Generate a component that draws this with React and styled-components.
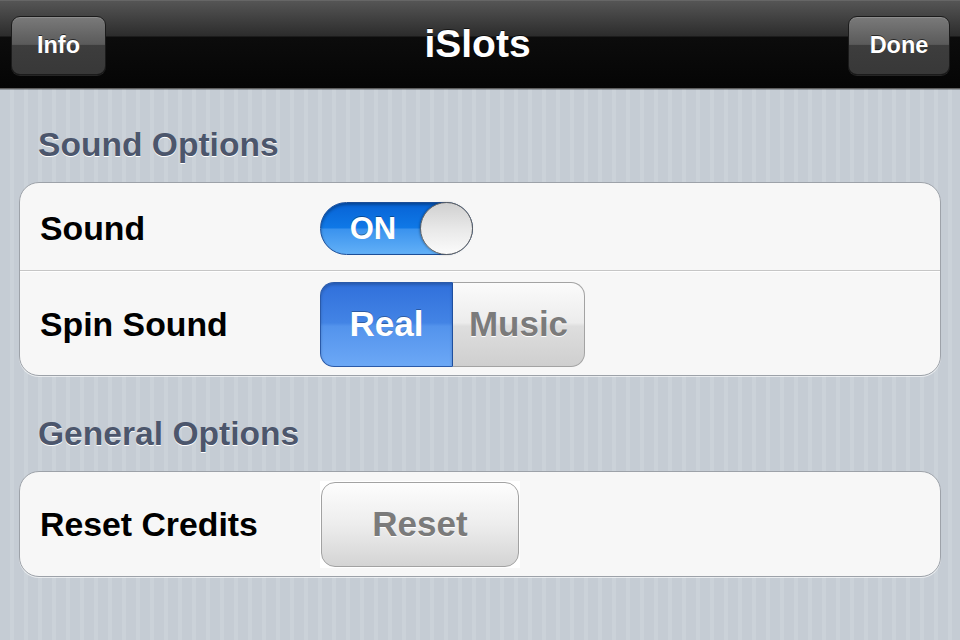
import styled, { createGlobalStyle } from "styled-components";
import { useState } from "react";

const GlobalStyle = createGlobalStyle`
    html, body {
        margin: 0;
        padding: 0;
    }

    body {
        width: 960px;
        height: 640px;
        overflow: hidden;
        font-family: "Liberation Sans", Arial, Helvetica, sans-serif;
        background: repeating-linear-gradient(90deg, #c5ccd4 0 10px, #cbd2d9 10px 14px);
    }
`

const Screen = styled.div`
    width: 960px;
    height: 640px;
    display: flex;
    flex-direction: column;
`

const NavBar = styled.header`
    height: 88px;
    flex-shrink: 0;
    display: grid;
    grid-template-columns: 1fr auto 1fr;
    align-items: center;
    padding: 0 10px 0 11px;
    border-bottom: 1px solid #5f5f5f;
    background: linear-gradient(180deg, #777 0, #555 1px, #2c2c2c 36px, #0c0c0c 37px, #050505 100%);
    box-shadow: 0 1px 0 rgba(0, 0, 0, 0.25);
`

const NavTitle = styled.h1`
    margin: 0 0 0 -6px;
    font-size: 39px;
    font-weight: bold;
    color: #fff;
    text-shadow: 0 -1px 0 rgba(0, 0, 0, 0.6);
`

const NavButton = styled.button`
    justify-self: ${(props) => (props.$right ? "end" : "start")};
    width: ${(props) => props.$width}px;
    height: 59px;
    margin-top: 2px;
    border: 1px solid #1b1b1b;
    border-radius: 9px;
    font-family: inherit;
    font-size: 23.5px;
    font-weight: bold;
    color: #fff;
    text-shadow: 0 -1px 0 rgba(0, 0, 0, 0.6);
    background: linear-gradient(180deg, #7a7a7a 0, #5a5a5a 48%, #3d3d3d 50%, #383838 100%);
    box-shadow: inset 0 1px 0 rgba(255, 255, 255, 0.15), 0 1px 0 rgba(255, 255, 255, 0.12);
`

const Content = styled.main`
    display: flex;
    flex-direction: column;
    gap: 38px;
    padding: 36px 19px 0;
`

const Section = styled.section`
    display: flex;
    flex-direction: column;
`

const SectionTitle = styled.h2`
    margin: 0 0 17px 19px;
    font-size: 33.6px;
    line-height: 40px;
    font-weight: bold;
    color: #4c566c;
    text-shadow: 0 1px 0 #fff;
`

const Group = styled.div`
    background: #f7f7f7;
    border: 1px solid #9da2a9;
    border-radius: 20px;
    box-shadow: 0 1px 0 rgba(255, 255, 255, 0.6);
    overflow: hidden;
`

const Row = styled.div`
    display: grid;
    grid-template-columns: 280px auto;
    align-items: center;
    box-sizing: border-box;
    height: ${(props) => props.$height}px;
    padding-left: 20px;
    padding-top: ${(props) => props.$offset || 0}px;

    & + & {
        border-top: 1px solid #c6c6c6;
        box-shadow: inset 0 1px 0 #fff;
    }
`

const Label = styled.span`
    font-size: 33.8px;
    font-weight: bold;
    color: #000;
`

const Toggle = styled.div`
    position: relative;
    width: 153px;
    height: 53px;
    box-sizing: border-box;
    border: 1px solid #1c4e98;
    border-radius: 27px;
    background: linear-gradient(180deg, #0763d6 0, #0f78e6 48%, #3b93ee 52%, #62b0f7 100%);
    box-shadow: inset 0 2px 3px rgba(0, 0, 0, 0.3);
    display: flex;
    align-items: center;
    cursor: pointer;
`

const ToggleText = styled.span`
    width: 104px;
    text-align: center;
    font-size: 31px;
    font-weight: bold;
    color: #fff;
    text-shadow: 0 -1px 0 rgba(0, 0, 0, 0.35);
`

const Knob = styled.span`
    position: absolute;
    top: -1px;
    right: -1px;
    width: 53px;
    height: 53px;
    box-sizing: border-box;
    border-radius: 50%;
    border: 1px solid #606060;
    background: linear-gradient(180deg, #d0d0d0 0, #e8e8e8 50%, #fbfbfb 100%);
    box-shadow: -1px 0 2px rgba(0, 0, 0, 0.25);
`

const Segmented = styled.div`
    display: flex;
    width: 265px;
    height: 85px;
`

const Segment = styled.button`
    flex: ${(props) => (props.$first ? "0 0 133px" : "1")};
    height: 85px;
    margin: 0;
    padding: 0;
    font-family: inherit;
    font-size: 35px;
    font-weight: bold;
    cursor: pointer;
    border: 1px solid ${(props) => (props.$active ? "#2a5aa9" : "#a3a3a3")};
    border-radius: ${(props) => (props.$first ? "14px 0 0 14px" : "0 14px 14px 0")};
    ${(props) => (props.$first ? "border-right-color: #1e4f9f;" : "border-left: none;")}
    color: ${(props) => (props.$active ? "#fff" : "#7b7b7b")};
    text-shadow: ${(props) => (props.$active ? "0 -1px 0 rgba(0, 0, 0, 0.3)" : "0 1px 0 #fff")};
    background: ${(props) =>
        props.$active
            ? "linear-gradient(180deg, #3070db 0, #4384e5 48%, #5393ec 52%, #6ca8f6 100%)"
            : "linear-gradient(180deg, #fbfbfb 0, #ececec 48%, #dedede 52%, #cfcfcf 100%)"};
    box-shadow: ${(props) => (props.$active ? "inset 0 2px 3px rgba(0, 0, 0, 0.2)" : "none")};
`

const ResetFrame = styled.div`
    width: 200px;
    height: 87px;
    background: #fff;
    padding: 1px;
    box-sizing: border-box;
`

const ResetButton = styled.button`
    width: 100%;
    height: 100%;
    border: 1px solid #a2a2a2;
    border-radius: 14px;
    font-family: inherit;
    font-size: 35px;
    font-weight: bold;
    color: #7b7b7b;
    text-shadow: 0 1px 0 #fff;
    background: linear-gradient(180deg, #fdfdfd 0, #ededed 50%, #d4d4d4 100%);
    cursor: pointer;
`

const App = () => {
    const [soundOn, setSoundOn] = useState(true)
    const [spinSound, setSpinSound] = useState("Real")

    return (
        <Screen>
            <GlobalStyle />
            <NavBar>
                <NavButton $width={95}>Info</NavButton>
                <NavTitle>iSlots</NavTitle>
                <NavButton $width={102} $right>Done</NavButton>
            </NavBar>
            <Content>
                <Section>
                    <SectionTitle>Sound Options</SectionTitle>
                    <Group>
                        <Row $height={87} $offset={4}>
                            <Label>Sound</Label>
                            <Toggle onClick={() => setSoundOn(!soundOn)}>
                                <ToggleText>{soundOn ? "ON" : "OFF"}</ToggleText>
                                <Knob />
                            </Toggle>
                        </Row>
                        <Row $height={105} $offset={2}>
                            <Label>Spin Sound</Label>
                            <Segmented>
                                {["Real", "Music"].map((option, index) => (
                                    <Segment
                                        key={option}
                                        $first={index === 0}
                                        $active={spinSound === option}
                                        onClick={() => setSpinSound(option)}
                                    >
                                        {option}
                                    </Segment>
                                ))}
                            </Segmented>
                        </Row>
                    </Group>
                </Section>
                <Section>
                    <SectionTitle>General Options</SectionTitle>
                    <Group>
                        <Row $height={104}>
                            <Label>Reset Credits</Label>
                            <ResetFrame>
                                <ResetButton>Reset</ResetButton>
                            </ResetFrame>
                        </Row>
                    </Group>
                </Section>
            </Content>
        </Screen>
    );
}

export default App
